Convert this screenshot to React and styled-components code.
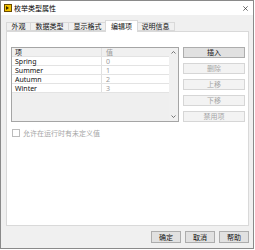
import React from 'react';
import styled, { createGlobalStyle } from 'styled-components';

const Global = createGlobalStyle`
  html, body { margin: 0; padding: 0; background: #ffffff; }
  body { font-family: "Noto Sans", "Noto Sans CJK SC", sans-serif; }
`;

const Window = styled.div`
  box-sizing: border-box;
  width: 254px;
  height: 249px;
  border: 1px solid #8a8a8a;
  background: #f0f0f0;
  display: flex;
  flex-direction: column;
  font-family: "Noto Sans", "Noto Sans CJK SC", sans-serif;
  font-size: 7px;
  line-height: 1;
  color: #111;
`;

const TitleBar = styled.div`
  height: 14px;
  background: #ffffff;
  display: flex;
  align-items: center;
  padding: 0 5px 0 3px;
`;

const Title = styled.span`
  flex: 1;
  margin-left: 2px;
  font-size: 7px;
  color: #000;
`;

const CloseBtn = styled.span`
  display: flex;
  align-items: center;
`;

const TabRow = styled.div`
  height: 17px;
  display: flex;
  align-items: flex-end;
  padding-left: 5px;
  margin-bottom: -1px;
  position: relative;
  z-index: 1;
`;

const Tab = styled.div`
  box-sizing: border-box;
  height: ${p => (p.$active ? '12px' : '9px')};
  margin: ${p => (p.$active ? '0 -1px 0 -2px' : '0 0 1px -1px')};
  padding: ${p => (p.$active ? '2px 5px 0' : '0 4.5px')};
  background: ${p => (p.$active ? '#ffffff' : '#f0f0f0')};
  border: 1px solid #d9d9d9;
  border-bottom: ${p => (p.$active ? 'none' : '1px solid #d9d9d9')};
  display: flex;
  align-items: ${p => (p.$active ? 'flex-start' : 'center')};
  position: relative;
  z-index: ${p => (p.$active ? 2 : 1)};
  white-space: nowrap;
  &:first-child { margin-left: 0; }
`;

const Panel = styled.div`
  box-sizing: border-box;
  flex: 1;
  margin: 0 4px 0 5px;
  background: #ffffff;
  border: 1px solid #d9d9d9;
  padding: 15px 3px 0 4px;
  display: flex;
  flex-direction: column;
`;

const TopRow = styled.div`
  display: flex;
  gap: 4px;
`;

const ListBox = styled.div`
  box-sizing: border-box;
  width: 170px;
  height: 75px;
  border: 1px solid #a5a5a5;
  display: flex;
  background: #efefef;
`;

const Table = styled.div`
  flex: 1;
  display: flex;
  flex-direction: column;
`;

const Row = styled.div`
  box-sizing: border-box;
  height: 9px;
  display: grid;
  grid-template-columns: 89px 1fr;
  background: ${p => (p.$head ? '#f0f0f0' : '#ffffff')};
  border-bottom: 1px solid #e3e3e3;
`;

const Cell = styled.div`
  display: flex;
  align-items: center;
  padding-left: ${p => (p.$value ? '4px' : '3px')};
  border-left: ${p => (p.$value ? '1px solid #e0e0e0' : 'none')};
  color: ${p => (p.$muted ? '#9a9a9a' : '#111')};
`;

const ScrollBar = styled.div`
  width: 9px;
  background: #f0f0f0;
  display: flex;
  flex-direction: column;
  justify-content: space-between;
  align-items: center;
  padding: 3px 0 3px;
`;

const SideButtons = styled.div`
  display: flex;
  flex-direction: column;
  gap: 5px;
`;

const Button = styled.div`
  box-sizing: border-box;
  width: ${p => p.$w || '62px'};
  height: ${p => p.$h || '11px'};
  display: flex;
  align-items: center;
  justify-content: center;
  background: ${p => (p.$disabled ? '#f3f3f3' : '#e1e1e1')};
  border: 1px solid ${p => (p.$disabled ? '#d6d6d6' : '#adadad')};
  color: ${p => (p.$disabled ? '#a6a6a6' : '#111')};
  white-space: nowrap;
`;

const CheckRow = styled.div`
  display: flex;
  align-items: center;
  margin-top: 7px;
  margin-left: 1px;
  gap: 3px;
  color: #a6a6a6;
`;

const CheckBox = styled.div`
  box-sizing: border-box;
  width: 8px;
  height: 8px;
  border: 1px solid #bcbcbc;
  background: #fff;
`;

const Footer = styled.div`
  height: 22px;
  box-sizing: border-box;
  display: flex;
  justify-content: flex-end;
  gap: 4px;
  padding: 5px 4px 0 0;
`;

const AppIcon = () => (
  <svg width="8" height="8" viewBox="0 0 8 8">
    <rect x="0.5" y="0.5" width="7" height="7" fill="#f2c200" stroke="#6b4a00" />
    <path d="M2 2 L5 4 L2 6 Z" fill="#3a2a00" />
  </svg>
);

const XIcon = () => (
  <svg width="5" height="5" viewBox="0 0 5 5">
    <path d="M0.3 0.3 L4.7 4.7 M4.7 0.3 L0.3 4.7" stroke="#333" strokeWidth="0.7" />
  </svg>
);

const Arrow = ({ down }) => (
  <svg width="5" height="3" viewBox="0 0 5 3">
    <path d={down ? 'M0.5 0.5 L2.5 2.5 L4.5 0.5' : 'M0.5 2.5 L2.5 0.5 L4.5 2.5'} fill="none" stroke="#555" strokeWidth="0.8" />
  </svg>
);

const tabs = ['外观', '数据类型', '显示格式', '编辑项', '说明信息'];
const items = [['Spring', '0'], ['Summer', '1'], ['Autumn', '2'], ['Winter', '3']];
const sideButtons = [
  ['插入', false],
  ['删除', true],
  ['上移', true],
  ['下移', true],
  ['禁用项', true],
];

export default function App() {
  return (
    <>
      <Global />
      <Window>
        <TitleBar>
          <AppIcon />
          <Title>枚举类型属性</Title>
          <CloseBtn><XIcon /></CloseBtn>
        </TitleBar>
        <TabRow>
          {tabs.map((t, i) => (
            <Tab key={t} $active={i === 3}>{t}</Tab>
          ))}
        </TabRow>
        <Panel>
          <TopRow>
            <ListBox>
              <Table>
                <Row $head>
                  <Cell>项</Cell>
                  <Cell $value $muted>值</Cell>
                </Row>
                {items.map(([n, v]) => (
                  <Row key={n}>
                    <Cell>{n}</Cell>
                    <Cell $value $muted>{v}</Cell>
                  </Row>
                ))}
              </Table>
              <ScrollBar>
                <Arrow />
                <Arrow down />
              </ScrollBar>
            </ListBox>
            <SideButtons>
              {sideButtons.map(([t, d]) => (
                <Button key={t} $disabled={d}>{t}</Button>
              ))}
            </SideButtons>
          </TopRow>
          <CheckRow>
            <CheckBox />
            <span>允许在运行时有未定义值</span>
          </CheckRow>
        </Panel>
        <Footer>
          <Button $w="30px" $h="12px">确定</Button>
          <Button $w="30px" $h="12px">取消</Button>
          <Button $w="30px" $h="12px">帮助</Button>
        </Footer>
      </Window>
    </>
  );
}
